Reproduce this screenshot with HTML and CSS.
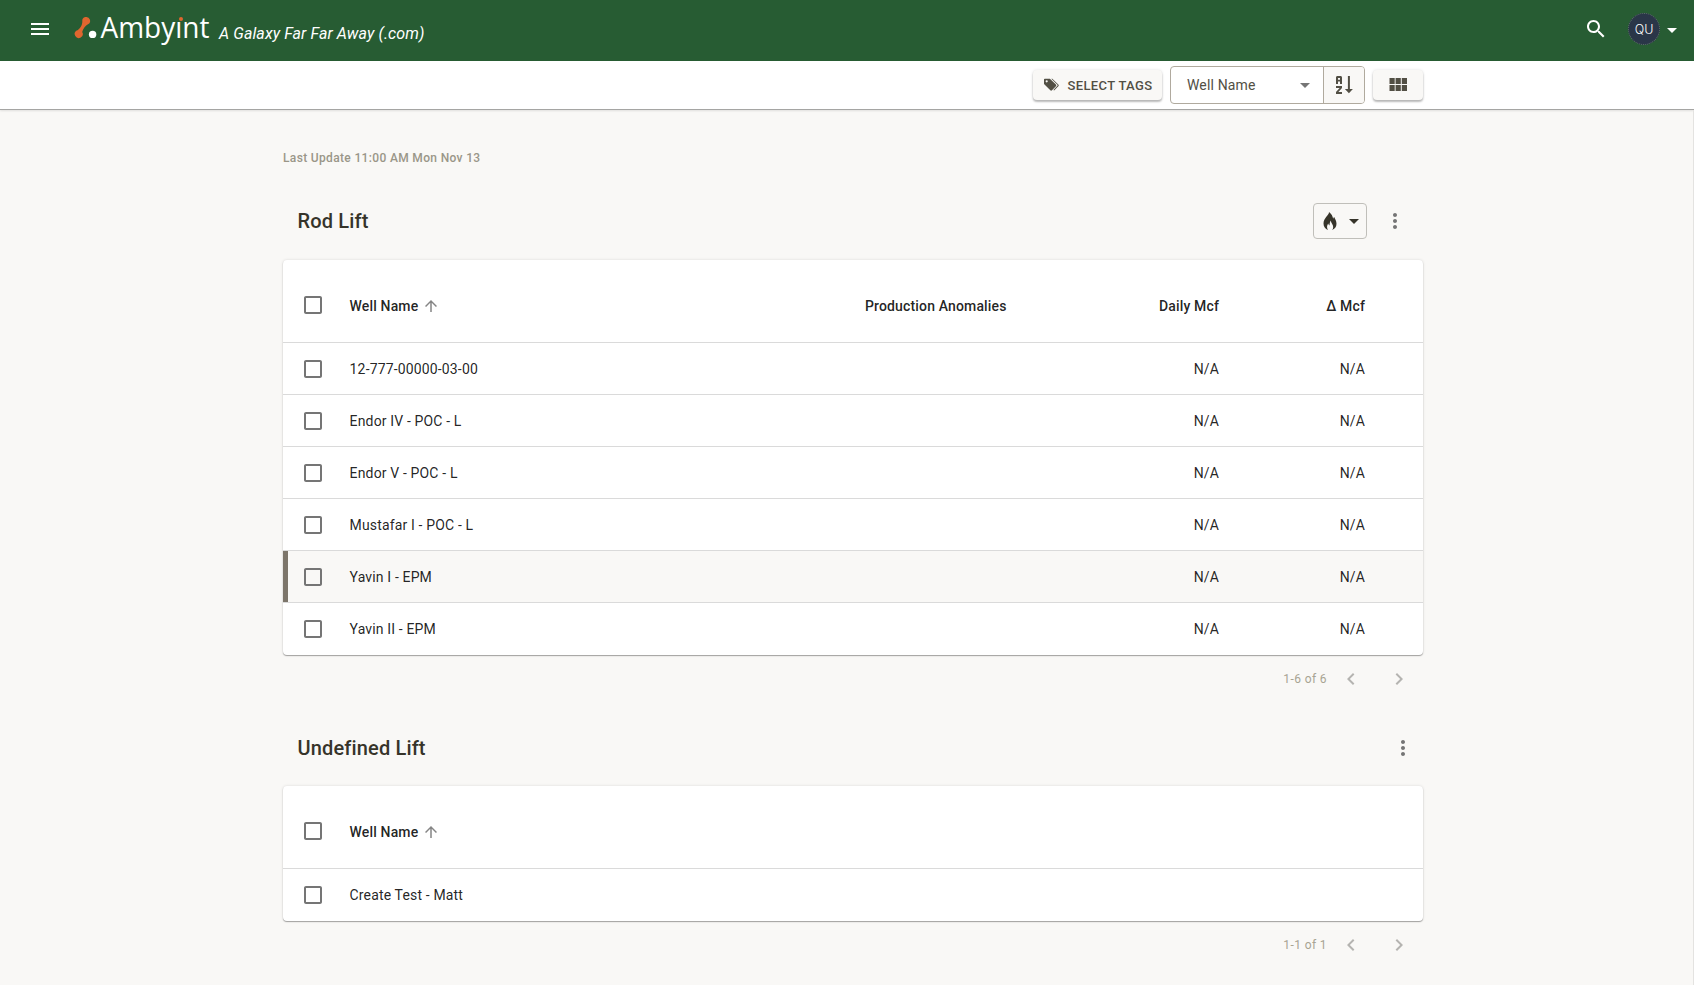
FILE: index.html
```html
<!DOCTYPE html>
<html lang="en">
<head>
<meta charset="utf-8">
<title>Ambyint</title>
<link rel="stylesheet" href="styles.css">
</head>
<body>
<svg class="defs" width="0" height="0">
  <symbol id="box" viewBox="0 0 24 24"><path d="M19 5v14H5V5h14m0-2H5c-1.100 0-2 .9-2 2v14c0 1.100.9 2 2 2h14c1.100 0 2-.9 2-2V5c0-1.100-.9-2-2-2z"/></symbol>
  <symbol id="up" viewBox="0 0 24 24"><path d="M4 12l1.410 1.410L11 7.830V20h2V7.830l5.580 5.590L20 12l-8-8-8 8z"/></symbol>
  <symbol id="caret" viewBox="0 0 24 24"><path d="M7 10l5 5 5-5z"/></symbol>
  <symbol id="more" viewBox="0 0 24 24"><path d="M12 8c1.100 0 2-.9 2-2s-.9-2-2-2-2 .9-2 2 .9 2 2 2zm0 2c-1.100 0-2 .9-2 2s.9 2 2 2 2-.9 2-2-.9-2-2-2zm0 6c-1.100 0-2 .9-2 2s.9 2 2 2 2-.9 2-2-.9-2-2-2z"/></symbol>
  <symbol id="left" viewBox="0 0 24 24"><path d="M15.410 7.410L14 6l-6 6 6 6 1.410-1.410L10.830 12z"/></symbol>
  <symbol id="right" viewBox="0 0 24 24"><path d="M10 6L8.590 7.410 13.170 12l-4.580 4.590L10 18l6-6z"/></symbol>
</svg>

<header class="appbar">
  <svg class="menu" width="24" height="24" viewBox="0 0 24 24"><path d="M3 18h18v-2H3v2zm0-5h18v-2H3v2zm0-7v2h18V6H3z"/></svg>
  <svg class="logo" width="140" height="32" viewBox="0 0 140 32">
    <path class="accent" d="M8.300 6.200A3.900 3.900 0 1 1 14 9.300C11.500 10.400 9.200 13.400 8.200 17A4 4 0 1 1 2.600 15.600C5.500 14.600 8.600 10.300 8.300 6.200Z"/>
    <circle cx="18.600" cy="19.400" r="3.700"/>
    <text class="wordmark" x="26.500" y="23" textLength="109" lengthAdjust="spacingAndGlyphs">Amby<tspan>ı</tspan>nt</text>
    <circle class="accent" cx="107" cy="3.900" r="2"/>
  </svg>
  <span class="org">A Galaxy Far Far Away (.com)</span>
  <svg class="search" width="24" height="24" viewBox="0 0 24 24"><path d="M15.500 14h-.79l-.28-.27C15.410 12.590 16 11.110 16 9.500 16 5.910 13.090 3 9.500 3S3 5.910 3 9.500 5.910 16 9.500 16c1.610 0 3.090-.59 4.230-1.570l.27.28v.79l5 4.990L20.490 19l-4.990-5zm-6 0C7.010 14 5 11.990 5 9.500S7.010 5 9.500 5 14 7.010 14 9.500 11.990 14 9.500 14z"/></svg>
  <span class="avatar">QU</span>
  <svg class="user-caret" width="24" height="24"><use href="#caret"/></svg>
</header>

<div class="toolbar">
  <div class="tools">
    <button class="btn tags">
      <svg width="16" height="16" viewBox="0 0 16 16"><path d="M1 2.500V7l6.300 6.200a1.200 1.200 0 0 0 1.700 0l3.900-3.900a1.200 1.200 0 0 0 0-1.700L6.900 1.700H1.800A.8.800 0 0 0 1 2.500zm2.700 2.900a1.100 1.100 0 1 1 0-2.200 1.100 1.100 0 0 1 0 2.200z"/><path d="M8.300 1.700h1l6 5.900a1.200 1.200 0 0 1 0 1.700l-4.200 4.200-.7-.6 4-4.100a.8.800 0 0 0 0-1.100z"/></svg>
      <span>SELECT TAGS</span>
    </button>
    <div class="sort">
      <div class="sort-field"><span>Well Name</span><svg width="24" height="24"><use href="#caret"/></svg></div>
      <div class="sort-dir">
        <svg width="20" height="20" viewBox="0 0 20 20"><path fill-rule="evenodd" d="M2 9V2.500C2 1.500 2.700 1 3.500 1H6.500C7.400 1 8 1.600 8 2.500V9H6V6.500H4V9zM4 3v1.700h2V3z"/><path d="M2 11h6v2l-3.600 4H8v2H2v-2l3.600-4H2zM13.900 1h2v13h3L14.900 18.300 10.900 14h3z"/></svg>
      </div>
    </div>
    <button class="btn grid"><svg width="24" height="24" viewBox="0 0 24 24"><path d="M3.500 11h5.200V5H3.500v6zm0 7h5.200v-6H3.500v6zm6.100 0h5.200v-6H9.600v6zm6.200 0H21v-6h-5.200v6zm-6.200-7h5.200V5H9.600v6zm6.200-6v6H21V5h-5.200z"/></svg></button>
  </div>
</div>

<main class="page">
  <div class="content">
    <div class="updated">Last Update 11:00 AM Mon Nov 13</div>

    <div class="section-head">
      <h2>Rod Lift</h2>
      <div class="fuel">
        <svg width="18" height="20" viewBox="0 0 18 20"><path d="M8 1C8.300 4 2.500 7 2.500 12.500c0 3.300 1.800 5.400 4.500 6.500-1.600-2.400-1-4.800.2-6.600.3 1 .7 1.600 1.300 2 .2-1.900.3-3.400 1.300-4.900.1 2.300 2.400 4 2.400 6.500 0 1.200-.4 2.200-1.200 3 2.700-.9 4.500-3.200 4.500-6.300 0-3-1.500-4.700-2.300-6.700-.6.500-.9 1-1 1.700C11.700 5.300 10.400 2.800 8 1z"/></svg>
        <svg width="24" height="24"><use href="#caret"/></svg>
      </div>
      <svg class="more" width="24" height="24"><use href="#more"/></svg>
    </div>
    <div class="card">
      <div class="row head"><svg class="check" width="24" height="24"><use href="#box"/></svg><span class="name">Well Name<svg class="up" width="18" height="18"><use href="#up"/></svg></span><span class="anom">Production Anomalies</span><span class="mcf">Daily Mcf</span><span class="delta">Δ Mcf</span></div>
      <div class="row"><svg class="check" width="24" height="24"><use href="#box"/></svg><span class="name">12-777-00000-03-00</span><span class="mcf">N/A</span><span class="delta">N/A</span></div>
      <div class="row"><svg class="check" width="24" height="24"><use href="#box"/></svg><span class="name">Endor IV - POC - L</span><span class="mcf">N/A</span><span class="delta">N/A</span></div>
      <div class="row"><svg class="check" width="24" height="24"><use href="#box"/></svg><span class="name">Endor V - POC - L</span><span class="mcf">N/A</span><span class="delta">N/A</span></div>
      <div class="row"><svg class="check" width="24" height="24"><use href="#box"/></svg><span class="name">Mustafar I - POC - L</span><span class="mcf">N/A</span><span class="delta">N/A</span></div>
      <div class="row hover"><svg class="check" width="24" height="24"><use href="#box"/></svg><span class="name">Yavin I - EPM</span><span class="mcf">N/A</span><span class="delta">N/A</span></div>
      <div class="row"><svg class="check" width="24" height="24"><use href="#box"/></svg><span class="name">Yavin II - EPM</span><span class="mcf">N/A</span><span class="delta">N/A</span></div>
    </div>
    <div class="pager"><span>1-6 of 6</span><svg width="24" height="24"><use href="#left"/></svg><svg width="24" height="24"><use href="#right"/></svg></div>

    <div class="section-head second">
      <h2>Undefined Lift</h2>
      <svg class="more" width="24" height="24"><use href="#more"/></svg>
    </div>
    <div class="card">
      <div class="row head"><svg class="check" width="24" height="24"><use href="#box"/></svg><span class="name">Well Name<svg class="up" width="18" height="18"><use href="#up"/></svg></span></div>
      <div class="row"><svg class="check" width="24" height="24"><use href="#box"/></svg><span class="name">Create Test - Matt</span></div>
    </div>
    <div class="pager"><span>1-1 of 1</span><svg width="24" height="24"><use href="#left"/></svg><svg width="24" height="24"><use href="#right"/></svg></div>
  </div>
</main>
</body>
</html>
```

FILE: styles.css
```css
* { box-sizing: border-box; }
html, body { height: 100%; }
body {
  margin: 0;
  display: flex;
  flex-direction: column;
  overflow: hidden;
  font-family: Roboto, "Liberation Sans", sans-serif;
  font-size: 14px;
  letter-spacing: 0.15px;
  color: rgba(0, 0, 0, 0.87);
  background: #f9f8f6;
}
svg { display: block; flex: none; fill: currentColor; }
.defs { position: absolute; }

.appbar {
  flex: none;
  height: 61px;
  display: flex;
  align-items: center;
  padding: 0 10px 3px 28px;
  background: #275c33;
  color: #fff;
}
.logo { margin: 4px 0 0 22px; overflow: visible; }
.accent { fill: #e0662f; }
.wordmark { font-family: "Open Sans", "Noto Sans", sans-serif; font-size: 29px; letter-spacing: 0; }
.org { margin: 8px 0 0 5px; font-size: 16px; font-style: italic; letter-spacing: 0.1px; }
.search { margin-left: auto; }
.avatar {
  width: 32px;
  height: 32px;
  margin-left: 20px;
  border-radius: 50%;
  border: 1px dotted #60716b;
  background: #2a3648;
  display: flex;
  align-items: center;
  justify-content: center;
  font-family: Inter, sans-serif;
  font-size: 12.5px;
  font-weight: 300;
  letter-spacing: 0;
}
.user-caret { margin-top: 2px; }

.toolbar {
  flex: none;
  height: 49px;
  background: #fff;
  border-bottom: 1px solid #a5a5a3;
  box-shadow: 0 1px 2px rgba(0, 0, 0, 0.1);
}
.tools {
  width: 1140px;
  height: 48px;
  margin-left: 283px;
  display: flex;
  align-items: center;
  justify-content: flex-end;
  gap: 8px;
  color: #524f44;
}
.btn {
  height: 30px;
  border: 0;
  border-radius: 4px;
  padding: 0;
  display: flex;
  align-items: center;
  justify-content: center;
  background: #f9f8f6;
  box-shadow: 0 2px 2px rgba(0, 0, 0, 0.25), 0 0 3px rgba(0, 0, 0, 0.12);
  color: inherit;
  font: 500 13px Roboto, sans-serif;
  letter-spacing: 0.35px;
}
.tags { width: 129px; gap: 9px; }
.grid { width: 50px; }
.sort {
  width: 195px;
  height: 38px;
  display: flex;
  border: 1px solid #b0aa9e;
  border-radius: 4px;
  overflow: hidden;
}
.sort-field {
  flex: 1;
  display: flex;
  align-items: center;
  justify-content: space-between;
  padding: 0 6px 0 16px;
}
.sort-field svg { color: #757575; }
.sort-dir {
  width: 41px;
  display: flex;
  align-items: center;
  justify-content: center;
  background: #f9f8f6;
  border-left: 1px solid #b0aa9e;
}

.page { flex: 1; border-right: 1px solid #e4e3e1; }
.content { width: 1140px; margin: 0 0 0 283px; }
.updated {
  height: 62px;
  padding-top: 40px;
  line-height: 16px;
  font-size: 12px;
  font-weight: 500;
  letter-spacing: 0.34px;
  color: #9a9688;
}
.section-head {
  height: 88px;
  padding: 10px 16px 0 14.5px;
  display: flex;
  align-items: center;
  color: #36342a;
}
.section-head h2 { flex: 1; margin: 0; font-size: 20px; font-weight: 500; letter-spacing: 0.15px; }
.fuel {
  width: 54px;
  height: 36px;
  display: flex;
  align-items: center;
  padding-left: 7px;
  gap: 3px;
  border: 1px solid #c0bfba;
  border-radius: 4px;
}
.more { margin-left: 16px; color: #757575; }
.second { height: 84px; padding: 8px 8px 0 14.5px; }

.card {
  background: #fff;
  border-radius: 4px;
  overflow: hidden;
  box-shadow: 0 1px 1px rgba(0, 0, 0, 0.32), 0 0 3px rgba(0, 0, 0, 0.13);
}
.row {
  height: 52px;
  display: grid;
  grid-template-columns: 66.6px 515.4px 230px 124px 146px;
  align-items: center;
  border-bottom: 1px solid #dadada;
}
.row:last-child { border-bottom-color: transparent; }
.head { height: 83px; font-weight: 500; }
.head .name, .head .anom, .head .mcf, .head .delta { padding-top: 10px; }
.head .check { margin-top: 7px; }
.check { margin-left: 18px; color: #757575; }
.name { grid-column: 2; display: flex; align-items: center; }
.up { margin-left: 3.5px; color: #858585; }
.anom { grid-column: 3; }
.mcf { grid-column: 4; text-align: right; }
.delta { grid-column: 5; text-align: right; }
.hover { background: #f9f8f6; box-shadow: inset 5px 0 #7c756a; }

.pager {
  height: 47px;
  display: flex;
  align-items: center;
  justify-content: flex-end;
  padding-right: 12px;
  gap: 24px;
  font-size: 12px;
  letter-spacing: 0.4px;
  color: #a8a493;
}
.pager span { margin-right: -12px; }
.pager svg { color: #b5b4b1; }
```
